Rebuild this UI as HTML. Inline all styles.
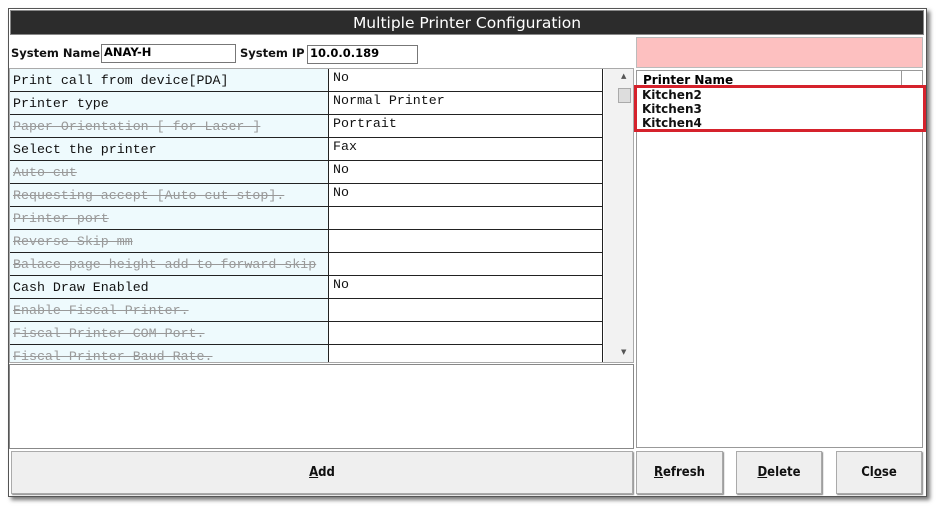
<!DOCTYPE html><html><head><style>
body{margin:0;width:941px;height:510px;background:#fff;position:relative;overflow:hidden;font-family:"DejaVu Sans",sans-serif}
.a{position:absolute;box-sizing:border-box}
.win{left:8px;top:8px;width:919px;height:489px;border:1px solid #555;box-shadow:3px 3px 4px #777;background:#fff}
.title{left:10px;top:10px;width:914px;height:25px;background:#2c2c2c;color:#fff;font:15.5px "DejaVu Sans",sans-serif;text-align:center;line-height:25px;border:1px solid #888}
.lbl{font:bold 11.5px "DejaVu Sans",sans-serif;color:#111}
.in{border:1px solid #777;height:19px;font:bold 11.5px "DejaVu Sans",sans-serif;padding-left:2px;line-height:15px}
.row{left:10px;width:593px;height:23px;border-top:1px solid #222}
.row .l{position:absolute;left:0;top:0;width:319px;height:22px;background:#eefafd;border-right:1px solid #222;font:13.3px "Liberation Mono",monospace;padding:4px 3px;box-sizing:border-box;color:#111;white-space:nowrap}
.row .l.s{color:#999;text-decoration:line-through}
.row .v{position:absolute;left:323px;top:1px;font:13.3px "Liberation Mono",monospace;color:#111}
.btn{top:451px;height:43px;background:#efefef;border:1px solid #aaa;box-shadow:1px 1px 1px #888;font:bold 13px "DejaVu Sans Condensed","DejaVu Sans",sans-serif;text-align:center;line-height:41px;color:#111}
</style></head><body>
<div class="a win"></div>
<div class="a title">Multiple Printer Configuration</div>
<div class="a lbl" style="left:11px;top:46px">System Name</div>
<div class="a in" style="left:101px;top:44px;width:135px">ANAY-H</div>
<div class="a lbl" style="left:240px;top:46px">System IP</div>
<div class="a in" style="left:307px;top:45px;width:111px">10.0.0.189</div>
<div class="a" style="left:636px;top:37px;width:287px;height:31px;background:#fdc0c0;border:1px solid #bbb"></div>
<div class="a" style="left:9px;top:68px;width:625px;height:295px;border:1px solid #aaa;overflow:hidden">
</div>
<div class="a" style="left:10px;top:69px;width:593px;height:293px;overflow:hidden;border-right:1px solid #222">
<div class="a row" style="top:-1px;left:0"><div class="l">Print call from device[PDA]</div><div class="v">No</div></div>
<div class="a row" style="top:22px;left:0"><div class="l">Printer type</div><div class="v">Normal Printer</div></div>
<div class="a row" style="top:45px;left:0"><div class="l s">Paper Orientation [ for Laser ]</div><div class="v">Portrait</div></div>
<div class="a row" style="top:68px;left:0"><div class="l">Select the printer</div><div class="v">Fax</div></div>
<div class="a row" style="top:91px;left:0"><div class="l s">Auto cut</div><div class="v">No</div></div>
<div class="a row" style="top:114px;left:0"><div class="l s">Requesting accept [Auto cut stop].</div><div class="v">No</div></div>
<div class="a row" style="top:137px;left:0"><div class="l s">Printer port</div></div>
<div class="a row" style="top:160px;left:0"><div class="l s">Reverse Skip mm</div></div>
<div class="a row" style="top:183px;left:0"><div class="l s">Balace page height add to forward skip</div></div>
<div class="a row" style="top:206px;left:0"><div class="l">Cash Draw Enabled</div><div class="v">No</div></div>
<div class="a row" style="top:229px;left:0"><div class="l s">Enable Fiscal Printer.</div></div>
<div class="a row" style="top:252px;left:0"><div class="l s">Fiscal Printer COM Port.</div></div>
<div class="a row" style="top:275px;left:0"><div class="l s">Fiscal Printer Baud Rate.</div></div>
</div>
<div class="a" style="left:604px;top:69px;width:29px;height:293px;background:#f2f2f2"></div>
<div class="a" style="left:618px;top:88px;width:13px;height:15px;background:#ddd;border:1px solid #aaa"></div>
<div class="a" style="left:621px;top:72px;font-size:7px;color:#555">▲</div>
<div class="a" style="left:621px;top:348px;font-size:7px;color:#555">▼</div>
<div class="a" style="left:9px;top:364px;width:625px;height:85px;border:1px solid #888"></div>
<div class="a" style="left:636px;top:70px;width:287px;height:378px;border:1px solid #999"></div>
<div class="a" style="left:637px;top:71px;width:265px;height:17px;border-right:1px solid #999;font:bold 12px 'DejaVu Sans',sans-serif;padding:2px 6px">Printer Name</div>
<div class="a" style="left:634px;top:85px;width:292px;height:47px;border:3px solid #d5222c;background:#fff;font:bold 12px 'DejaVu Sans',sans-serif;line-height:14px;padding:0 5px;color:#111">Kitchen2<br>Kitchen3<br>Kitchen4</div>
<div class="a btn" style="left:11px;width:622px"><u>A</u>dd</div>
<div class="a btn" style="left:636px;width:87px"><u>R</u>efresh</div>
<div class="a btn" style="left:736px;width:86px"><u>D</u>elete</div>
<div class="a btn" style="left:836px;width:86px">Cl<u>o</u>se</div>
</body></html>
